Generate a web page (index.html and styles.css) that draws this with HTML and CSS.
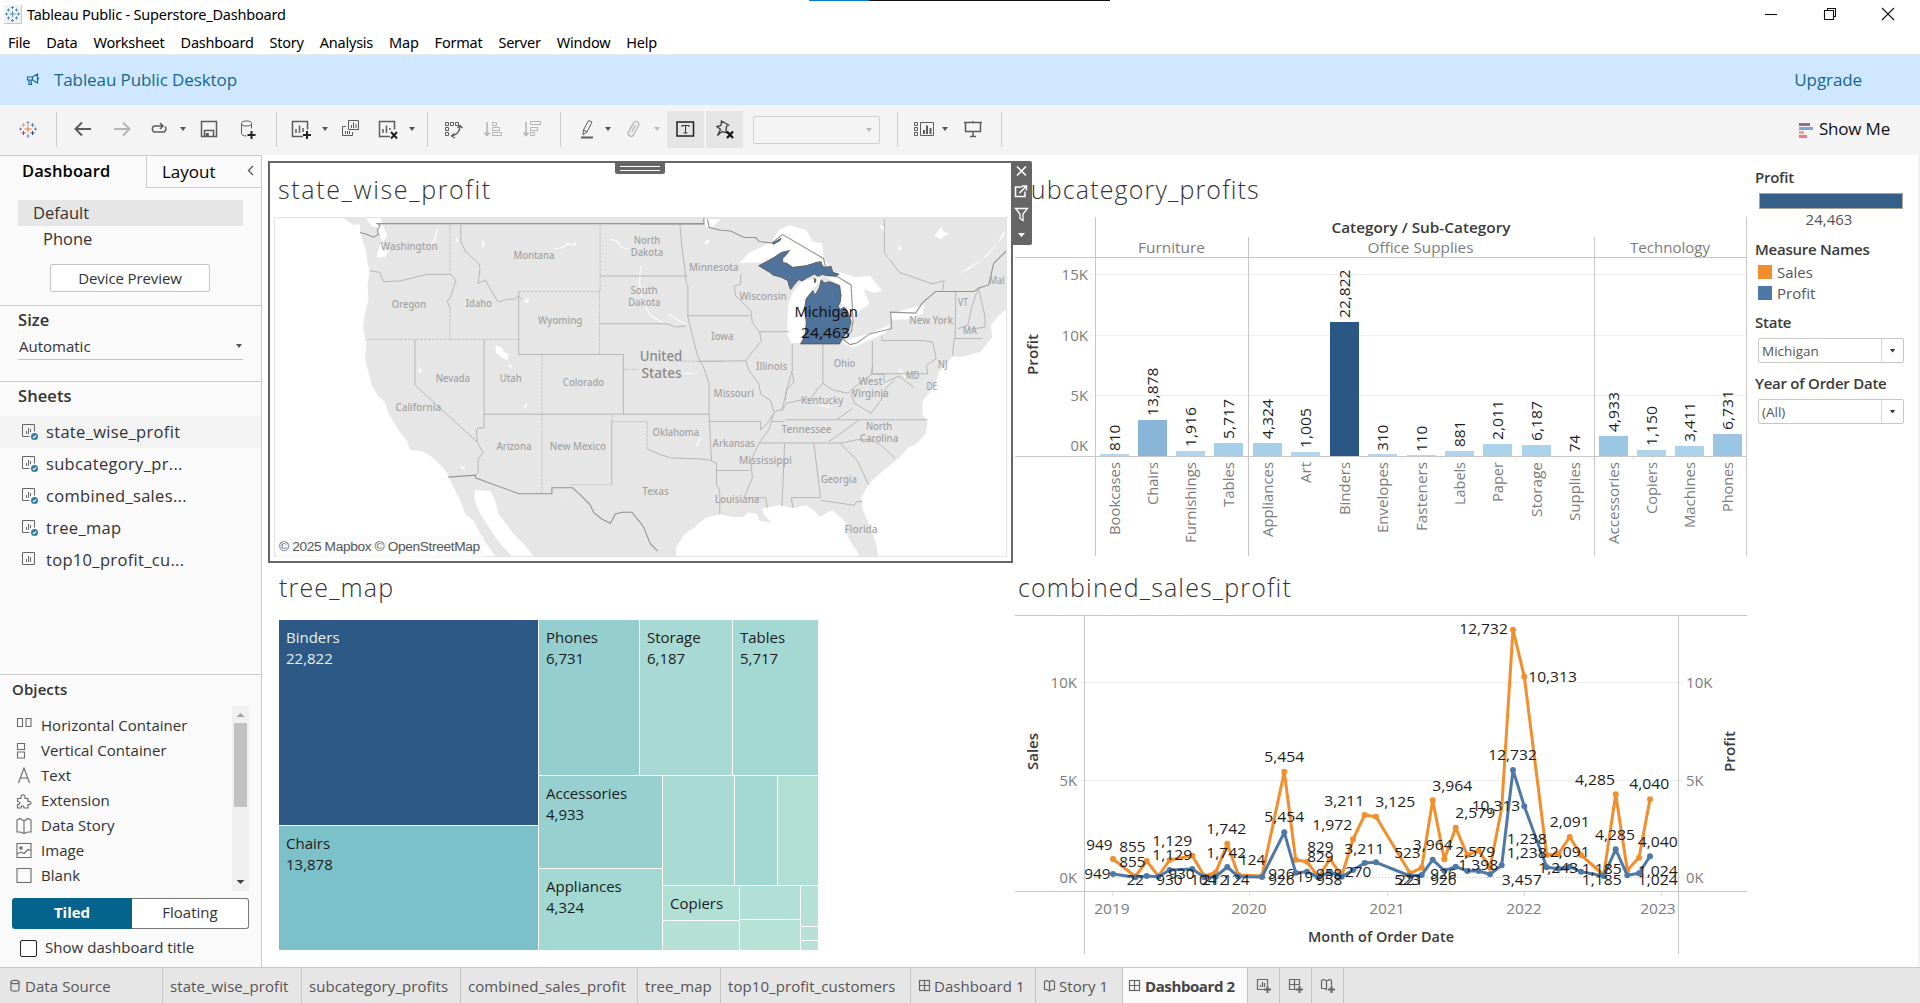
FILE: index.html
```html
<!DOCTYPE html>
<html lang="en">
<head>
<meta charset="utf-8">
<title>Tableau Public - Superstore_Dashboard</title>
<link rel="stylesheet" href="styles.css">
</head>
<body>
<svg width="0" height="0" class="defs">
  <symbol id="i-sheet" viewBox="0 0 18 18"><rect x="1.5" y="1.5" width="12" height="12" rx=".5"/><path d="M5.500 11V8M7.500 11V5M9.500 11V6"/></symbol>
  <symbol id="i-check" viewBox="0 0 18 18"><path d="M8.500 13.500h-7v-12h12v7"/><path d="M5.500 11V8M7.500 11V5M9.500 9V6"/><circle cx="13.500" cy="13.500" r="3.500" fill="#2f7ca3" stroke="none"/><path d="M11.800 13.600l1.200 1.200 2.100-2.400" stroke="#fff" stroke-width="1.100"/></symbol>
  <symbol id="i-grid" viewBox="0 0 14 14"><rect x="1.500" y="1.500" width="10" height="10"/><path d="M6.500 1.500v10M1.500 6.500h10"/></symbol>
  <symbol id="i-book" viewBox="0 0 14 14"><path d="M1.500 2.500l2-1 3 1.500 3-1.500 2 1v8l-2.500 0-2.500 1.500-2.500-1.500h-2.500zM6.500 3v9"/></symbol>
</svg>
<div class="app">
  <header class="titlebar">
    <svg class="app-icon" width="18" height="19" viewBox="0 0 18 19"><rect x="0" y="0" width="18" height="19" fill="#c9c9c9"/><rect x="0" y="0" width="17" height="18" fill="#f1f1f1"/><path d="M8.500 6v6M5.500 9h6M8.500 1v3M7 2.500h3M8.500 14v3M7 15.500h3M2.500 7.500v3M1 9h3M14.500 7.500v3M13 9h3M4.500 3.500v3M3 5h3M12.500 3.500v3M11 5h3M4.500 11.500v3M3 13h3M12.500 11.500v3M11 13h3" stroke="#4f90b5" fill="none"/></svg>
    <span class="win-title">Tableau Public - Superstore_Dashboard</span>
    <i class="progress"></i>
    <div class="win-buttons">
      <svg width="14" height="14" viewBox="0 0 14 14"><path d="M1 7.500h12"/></svg>
      <svg width="14" height="14" viewBox="0 0 14 14"><path d="M1.500 3.500h9v9h-9zM4.500 3.500v-2h8v8h-2"/></svg>
      <svg width="14" height="14" viewBox="0 0 14 14"><path d="M1 1l12 12M13 1L1 13"/></svg>
    </div>
  </header>
  <nav class="menubar"><span>File</span><span>Data</span><span>Worksheet</span><span>Dashboard</span><span>Story</span><span>Analysis</span><span>Map</span><span>Format</span><span>Server</span><span>Window</span><span>Help</span></nav>
  <div class="banner">
    <svg width="14" height="13" viewBox="0 0 14 13"><path d="M1.500 4h5l5-3v9l-5-3h-5zM3 7v4.500h2.500l-.5-4.500M6.500 4v3M11.500 4.500l1 1-1 1" fill="none" stroke="#14679c" stroke-width="1.200"/></svg>
    <span>Tableau Public Desktop</span><a class="upgrade">Upgrade</a>
  </div>
  <div class="toolbar">
    <svg class="ico m16" viewBox="0 0 24 24" fill="none" stroke-width="1.200"><path d="M12 8.500v7M8.500 12h7" stroke="#eb7a3a"/><path d="M12 4v4M10.500 5.500h3M12 17v4M10.500 19h3" stroke="#7a96b5"/><path d="M7.500 6v4M5.500 8h4" stroke="#e8a33b"/><path d="M16.500 6v4M14.500 8h4" stroke="#5b87a8"/><path d="M7.500 14v4M5.500 16h4" stroke="#c8324c"/><path d="M16.500 14v4M14.500 16h4" stroke="#2c4a7c"/><path d="M4.500 10.500v3M3 12h3M19.500 10.500v3M18 12h3" stroke="#7a7fa8"/></svg>
    <i class="sep m16"></i>
    <svg class="ico m14" viewBox="0 0 24 24"><path d="M11 5.500L4.500 12l6.500 6.500M5 12h15" stroke-width="2"/></svg>
    <svg class="ico m15 off" viewBox="0 0 24 24"><path d="M13 5.500l6.500 6.500-6.500 6.500M19 12H4" stroke-width="2"/></svg>
    <svg class="ico m13" viewBox="0 0 24 24"><path d="M15 9H7a3.500 3.500 0 0 0 0 6h10a3.500 3.500 0 0 0 1-5.500M13 6l3 3-3 3" stroke-width="1.500"/></svg>
    <i class="caret m7"></i>
    <svg class="ico m9" viewBox="0 0 24 24"><path d="M4.500 4.500h15v15h-15zM7.500 19.500v-6h9v6M9.500 19v-3M11 19v-3" stroke-width="1.500"/></svg>
    <svg class="ico m15" viewBox="0 0 24 24"><path d="M5.500 6.500v10c0 1.500 2 2.500 5 2.500M15.500 6.500v5"/><ellipse cx="10.500" cy="6.500" rx="5" ry="2.500"/><path d="M15.500 14v8M11.500 18h8" stroke="#222" stroke-width="2"/></svg>
    <i class="sep m16"></i>
    <svg class="ico m13" viewBox="0 0 24 24"><path d="M13 19.500H2.500v-15h15v8M6 16v-4M9.500 16V8.500M13 15v-4" stroke-width="1.500"/><path d="M17 14v8M13 18h8" stroke="#222" stroke-width="2"/></svg>
    <i class="caret m6"></i>
    <svg class="ico m9" viewBox="0 0 24 24"><path d="M9.500 3.500h10v9h-10zM12.500 11V8M14.500 11V5.500M17 11V7M7 9.500H3.500v9h10V15M6.500 17v-3M8.500 17v-3M10.500 17v-3"/></svg>
    <svg class="ico m14" viewBox="0 0 24 24"><path d="M13 19.500H2.500v-15h15v8M6 16v-4M9.500 16V8.500M13 13v-2" stroke-width="1.500"/><path d="M14 15l6 6.500M20 15l-6 6.500" stroke="#222" stroke-width="2"/></svg>
    <i class="caret m6"></i>
    <i class="sep m10"></i>
    <svg class="ico m14" viewBox="0 0 24 24"><path d="M3.500 5.500h3v3h-3zM8.500 5.500h3v3h-3zM13.500 5.500h3v3h-3zM3.500 10.500h3v3h-3zM3.500 15.500h3v3h-3z"/><path d="M18 9c0 5.500-3 8.500-8 10M15.500 11L18 8.500l2.500 2.500M12.500 16.500L9.500 19l3.500 2" stroke-width="1.300"/></svg>
    <svg class="ico m15 off" viewBox="0 0 24 24"><path d="M6 5v13M3.500 15.500L6 18.500l2.500-3" stroke-width="1.500"/><path d="M11.500 5.500h4v3h-4zM11.500 10.500h7v3h-7zM11.500 15.500h9v3h-9z"/></svg>
    <svg class="ico m15 off" viewBox="0 0 24 24"><path d="M6 5v13M3.500 15.500L6 18.500l2.500-3" stroke-width="1.500"/><path d="M10.500 4.500h10v3h-10zM10.500 10.500h7v3h-7zM10.500 15.500h4v3h-4z"/></svg>
    <i class="sep m16"></i>
    <svg class="ico m14" viewBox="0 0 24 24"><path d="M13.500 3.500l3.500 1.500-5 10-4 3 .5-5zM8.500 13l3.500 2"/><path d="M6 20.500h12" stroke-width="2"/></svg>
    <i class="caret m4"></i>
    <svg class="ico m8 off" viewBox="0 0 24 24"><path d="M8.500 13l4-7a2.600 2.600 0 0 1 5 2.500l-5 9.500a3 3 0 0 1-5.300-2.600L12 7.500M10.500 15.500l4-7.500" stroke-width="1.300"/></svg>
    <i class="caret m7 dim"></i>
    <span class="tool m5"><svg class="ico" viewBox="0 0 24 24"><path d="M3 5h16.500v14H3z" stroke="#222" stroke-width="1.500"/><path d="M8 10V8.500h7V10M11.500 8.500v7.500M9.500 16h4" stroke="#333"/></svg></span>
    <span class="tool m2"><svg class="ico" viewBox="0 0 24 24"><path d="M8.500 4l7 4-2 1.500-.5 4 1 2.500-5-1.500-4.500 4 3-6-3.500-3 4-1z" stroke-width="1.400" stroke="#444"/><path d="M14 14.500l6 6.500M20 14.500l-6 6.500" stroke="#111" stroke-width="2.200"/></svg></span>
    <span class="combo m10"><i class="caret dim"></i></span>
    <i class="sep m17"></i>
    <svg class="ico m14" viewBox="0 0 24 24"><path d="M2.500 5.500h3v3h-3zM2.500 10.500h3v3h-3zM2.500 15.500h3v3h-3zM8.500 5.500h13v13h-13z"/><path d="M12 17v-4M15 17V8.500M18.500 17v-6" stroke-width="2"/></svg>
    <i class="caret m4"></i>
    <svg class="ico m11" viewBox="0 0 24 24"><path d="M3 5.500h18M4.500 5.500v9h15v-9M12 14.500v5M9 19.500h6M12 4v1" stroke-width="1.500"/></svg>
    <i class="sep m16"></i>
    <span class="showme"><svg width="14" height="15" viewBox="0 0 14 15"><path fill="#8a6fa0" d="M0 0h11v3H0z"/><path fill="#7fa6cf" d="M0 4h14v3H0z"/><path fill="#f3a582" d="M0 8h5v3H0z"/><path fill="#fb7185" d="M0 12h8v3H0z"/></svg><span>Show Me</span></span>
  </div>

  <div class="workspace">
    <aside class="side">
      <div class="side-tabs"><b>Dashboard</b><span class="layout"><em>Layout</em><svg width="7" height="11" viewBox="0 0 7 11"><path d="M6 1L1.500 5.500 6 10" fill="none" stroke="#555" stroke-width="1.300"/></svg></span></div>
      <div class="devices">
        <div class="dev on">Default</div>
        <div class="dev phone">Phone</div>
        <div class="preview"><span>Device Preview</span></div>
      </div>
      <div class="size">
        <h4>Size</h4>
        <div class="size-select"><span>Automatic</span><i class="caret"></i></div>
      </div>
      <div class="sheets">
        <h4>Sheets</h4>
        <div class="sheet on"><svg><use href="#i-check"/></svg><span>state_wise_profit</span></div>
        <div class="sheet"><svg><use href="#i-check"/></svg><span>subcategory_pr...</span></div>
        <div class="sheet"><svg><use href="#i-check"/></svg><span>combined_sales...</span></div>
        <div class="sheet"><svg><use href="#i-check"/></svg><span>tree_map</span></div>
        <div class="sheet"><svg><use href="#i-sheet"/></svg><span>top10_profit_cu...</span></div>
      </div>
      <div class="objects">
        <h5>Objects</h5>
        <div class="obj-wrap">
          <div class="obj-list">
            <div><svg viewBox="0 0 16 17"><path d="M1.500 1.500h5v8h-5zM10 1.500h5v8h-5z"/></svg><span>Horizontal Container</span></div>
            <div><svg viewBox="0 0 16 17"><path d="M1.500 1.500h7v6h-7zM1.500 10h7v6h-7z"/></svg><span>Vertical Container</span></div>
            <div><svg viewBox="0 0 16 17"><path d="M2.500 16L8 1l5.500 15M4.500 11h7"/></svg><span>Text</span></div>
            <div><svg viewBox="0 0 16 17"><path d="M1.500 6.500h3.500c-1-5 5-5 4 0h3v3c4-1 4 4 0 3v3.500h-4c0-3-3-3-3 0H1.500v-3.500c3 0 3-3 0-3z"/></svg><span>Extension</span></div>
            <div><svg viewBox="0 0 16 17"><path d="M1 3l3-1.500L8 4l4-2.500L15 3v12h-3l-4 1.500L4 15H1zM8 4v12"/></svg><span>Data Story</span></div>
            <div><svg viewBox="0 0 16 17"><path d="M1 1.500h14v14H1zM1 12l4-2 3 1.500 4-4 3 1"/><circle cx="5" cy="6" r="1.200" fill="#666"/></svg><span>Image</span></div>
            <div><svg viewBox="0 0 16 17"><path d="M1 1.500h14v14H1z"/></svg><span>Blank</span></div>
          </div>
          <div class="scroll"><i class="up"></i><i class="thumb"></i><i class="down"></i></div>
        </div>
        <div class="toggle"><b>Tiled</b><span>Floating</span></div>
        <label class="show-title"><i></i><span>Show dashboard title</span></label>
      </div>
    </aside>

    <main class="canvas">
      <section class="left-col">
        <div class="zone map-zone">
          <i class="grip"></i>
          <div class="zone-actions">
            <svg viewBox="0 0 21 84"><path d="M6 5.500l9 9M15 5.500l-9 9" stroke-width="1.600"/><path d="M11 26H4.500v9.500H14v-5M8.500 32l6-6M11 25h4.500v4.500" stroke-width="1.500"/><path d="M4.500 47.500h12l-4.500 5.500v6.500l-3-2v-4.500z" stroke-width="1.300"/><path d="M7 72h7l-3.500 4z" fill="#fff" stroke="none"/></svg>
          </div>
          <h2>state_wise_profit</h2>
          <svg class="map" viewBox="27 186 2199 1020" preserveAspectRatio="none">
            <rect x="27" y="186" width="2199" height="1020" fill="#fff"/>
            <path class="land" d="M235 186L262 207 283 205 283 228 290 255 302 290 305 320 312 345 305 390 308 430 295 490 292 520 302 560 297 610 308 650 318 690 335 720 358 742 368 775 385 805 405 835 425 860 432 886 470 890 500 908 525 932 545 955 552 975 565 1000 585 1040 600 1080 625 1100 640 1130 660 1165 690 1206H740L710 1175 690 1150 665 1110 645 1080 628 1040 627 1005 650 1008 675 1010 690 1040 700 1080 720 1105 745 1140 775 1170 805 1206H1235L1233 1180 1255 1145 1275 1128 1290 1120 1300 1108 1325 1090 1365 1080 1405 1088 1435 1088 1450 1075 1475 1078 1485 1100 1520 1106 1498 1080 1490 1062 1510 1060 1545 1052 1585 1062 1625 1053 1650 1070 1665 1088 1690 1075 1705 1068 1725 1085 1745 1108 1743 1130 1760 1165 1780 1195 1785 1206H1842L1835 1165 1815 1115 1797 1070 1790 1030 1812 990 1845 958 1885 925 1910 905 1930 880 1955 868 1985 838 1990 800 1975 780 1975 740 1990 720 2012 690 2025 650 2065 605 2095 605 2150 590 2165 570 2185 545 2180 510 2205 480 2226 462V186H345L350 205 365 240 350 260 335 215 318 210 300 186Z"/>
            <path class="water" d="M690 570l20 8 5 12 15 8-5 18-15-8-18-15zM728 628l12 2-4 12zM458 632l12 18-8 4zM585 930l18 15-14-2zM335 290l12-30 10 8-5 20 20-10-12 25-25 3zM780 750l5-8 0 12-15 10zM900 1018l8 15-6-6zM570 243l10 12-6 5zM650 250l8 12-8 15zM778 434l10-5 3 12-12 0z"/>
            <path class="river" d="M515 217l-5 30-12 18M865 280l30-5 10-12 25 5v-10M1035 250l20 5 15 20 20 5M1128 330l-5 50 10 60 25 40 40 25M1210 475l30 20 20 10"/>
            <g transform="translate(1125 0)">
              <path class="water" d="M298 322L330 290 395 260 418 222 450 208 500 222 520 258 548 262 552 310 575 335 540 322 460 335 430 310 380 320zM550 365L490 376 462 405 445 450 443 535 455 565 485 562 502 500 495 430 540 380zM553 348L600 350 650 365 692 360 728 405 705 412 672 400 690 445 655 470 640 500 620 462 605 440 605 390 560 365zM605 560L640 548 690 535 752 508 740 532 690 555 640 578zM752 475L800 462 855 448 850 475 800 492 758 492zM1095 225L1075 262 1030 310 958 355 990 340 1045 300 1098 235zM192 190l50 0-20 20-22 4zM910 210l-25 30 20 10 10-10 15-5-20-10zM720 205l14 8 6 14-12-6zM778 265l8 12-8 10zM745 300l10 8-6 4zM190 260l20-10-6 15z"/>
              <path class="river" d="M180 850l-10 25M540 750l30 8M780 640l20 30M130 655l30 0"/>
            </g>
            <g class="lines">
              <path class="nat" d="M283 230l20 5 20 9 15-8-3-13 8-15-8-5H1316M548 968l82-6v8l130 48h100v-18h62l22 20 30 30 12 25 25 20 25 12 15-28 20-5h30l20 25 15 20 20 50 22 22"/>
              <path class="pale" d="M553 205v145M1005 205v202M760 408h245M1003 408v190M448 552H300M553 465v87H448M553 552h207M830 598v420M915 991h125M1041 780v25M1041 800h106v83M1075 643h50M1375 618h-160"/>
              <path d="M312 345l30 5 12 28 50-2 80-20h73M556 355l15 20-16 50-10 12 10 25M586 205v55l15 28 38 35 5 15-6 45 22-10 18 33 20 33 30-8h20l12-10 10 12M760 408v190M1005 361h262M1003 505h200l30 10 30-3M448 552v138l187 172 18 32-15 20v40l-8 10M656 552v267l-15 0-8 5 2 38M656 778h677M760 598h315v180M1040 800v191M1147 883l40 17 30 10 50 2 30 0 40 5"/>
            </g>
            <g class="lines" transform="translate(1125 0)">
              <path class="nat" d="M192 186v18H0M203 190l5 25 35 8 30 2 40 20 35 0 10 12 38 4 33-25 123 72 8 35 75 45 6 110-5 30-24 25 20 15 20-5 40-28 65-15-3-50 75 3 20-30 40-35h115l20-12 25-8 15-65 45-45"/>
              <path d="M120 205l5 60 8 60 6 55 5 10v92M143 481h185M143 481l10 40 20 80 20 40 15 45V780M173 619l145-2 12-16 20-25 15-20-5-25-22-30-5-35-45-45-5-30 20-5 0-30M360 529h88M318 617l10 30 30 40 5 30 30 20 10 35 25-10 15-60 20-20-5-30M458 565v80l-20 70v20M550 565v120l-15 15-20 30-30 5-45 10-15 25M550 685l30 20 45 10 35-30 35-25 5-30M699 558v98h167l-5-25 30-20-10-50-25-5H728v-12M699 658h35v25l45-20 45 35M660 700l-25 15 10 30 50 30 30-40 15-35 25-25M940 600l5-50h85M950 408l-2 140M1018 395l-20 60-12 55-30 10M1018 395l20 90v30l-50 8M208 800h155v25l20-20 20-30M208 780l7 140M215 920l15 5v65l10 20v70M230 948h100M403 775l-15 50-30 40-25 55 5 50-25 60M358 865h250l45-10h40l30 15 45 42M438 795h427M660 795l-90 65M395 800h40M590 795l50-35M435 867l-8 190M523 867l20 163h-88l5 30M545 1038l100 15 5-10 20-3M603 867l50 50 35 75M313 1030h65l5 30M735 190v100l45 60 100 35 35-10-5 30"/>
            </g>
            <g transform="translate(1125 0)" class="mich"><path d="M357 330L400 307 425 290 450 284 440 297 428 310 430 322 440 322 460 335 500 330 530 320 545 318 548 330 555 335 575 332 580 350 598 355 590 362 560 360 550 356 535 362 525 355 500 368 488 376 478 372 470 380 462 390 453 402 448 390 445 375 425 365 400 358 390 350zM545 372L555 382 570 378 585 384 600 390 605 420 602 440 596 452 602 462 615 455 628 475 635 500 628 525 612 545 600 566H483L497 540 500 500 495 460 500 430 520 405 525 418 532 410 540 395zM398 262L425 247 420 255 402 265zM524 368l6 4-4 10z"/></g>
            <g class="states" id="states"></g>
          </svg>
          <div class="credit">© 2025 Mapbox © OpenStreetMap</div>
        </div>
        <div class="tree-zone">
          <h2>tree_map</h2>
          <div class="treemap">
            <div class="tm-col a">
              <div class="c1"><span>Binders</span><span>22,822</span></div>
              <div class="c2"><span>Chairs</span><span>13,878</span></div>
            </div>
            <div class="tm-col b">
              <div class="tm-row top"><div class="phones"><span>Phones</span><span>6,731</span></div><div class="storage"><span>Storage</span><span>6,187</span></div><div class="tables"><span>Tables</span><span>5,717</span></div></div>
              <div class="tm-row rest">
                <div class="tm-col acc"><div class="c-acc"><span>Accessories</span><span>4,933</span></div><div class="c-app"><span>Appliances</span><span>4,324</span></div></div>
                <div class="tm-col misc">
                  <div class="tm-row m-top"><div></div><div></div><div></div></div>
                  <div class="tm-row m-bot">
                    <div class="tm-col k1"><div class="copiers"><span>Copiers</span></div><div></div></div>
                    <div class="tm-col k2"><div></div><div></div></div>
                    <div class="tm-col k3"><div></div><div></div><div></div></div>
                  </div>
                </div>
              </div>
            </div>
          </div>
        </div>
      </section>
      <section class="mid-col">
        <div class="bar-zone">
          <h2>subcategory_profits</h2>
          <svg id="bars" class="chart" width="733" height="340" viewBox="1015 217 733 340"></svg>
        </div>
        <div class="line-zone">
          <h2>combined_sales_profit</h2>
          <svg id="trend" class="chart" width="733" height="340" viewBox="1015 615 733 340"></svg>
        </div>
      </section>
      <section class="legend">
        <h3>Profit</h3>
        <div class="ramp"></div>
        <div class="ramp-value">24,463</div>
        <h3>Measure Names</h3>
        <div class="key"><i class="k-sales"></i><span>Sales</span></div>
        <div class="key"><i class="k-profit"></i><span>Profit</span></div>
        <h3 class="f1">State</h3>
        <div class="select"><span>Michigan</span><b><i class="caret"></i></b></div>
        <h3 class="f2">Year of Order Date</h3>
        <div class="select"><span>(All)</span><b><i class="caret"></i></b></div>
      </section>
    </main>
  </div>

  <footer class="tabs">
    <div class="t-ds"><svg viewBox="0 0 14 14"><ellipse cx="7" cy="3" rx="4" ry="1.700"/><path d="M3 3v8c0 1.500 8 1.500 8 0V3"/></svg><span>Data Source</span></div>
    <div class="t1"><span>state_wise_profit</span></div>
    <div class="t2"><span>subcategory_profits</span></div>
    <div class="t3"><span>combined_sales_profit</span></div>
    <div class="t4"><span>tree_map</span></div>
    <div class="t5"><span>top10_profit_customers</span></div>
    <div class="t6"><svg><use href="#i-grid"/></svg><span>Dashboard 1</span></div>
    <div class="t7"><svg><use href="#i-book"/></svg><span>Story 1</span></div>
    <div class="t8 on"><svg><use href="#i-grid"/></svg><b>Dashboard 2</b></div>
    <div class="tn"><svg class="add" viewBox="0 0 16 16"><path d="M8 11.500H1.500v-10h10v6M4.500 9V7M6.500 9V4M8.500 9V5"/><path d="M11.500 8v7M8 11.500h7" stroke-width="2"/></svg></div>
    <div class="tn"><svg class="add" viewBox="0 0 16 16"><path d="M8 11.500H1.500v-10h10v6M6.500 1.500v10M1.500 6.500h10"/><path d="M11.500 8v7M8 11.500h7" stroke-width="2"/></svg></div>
    <div class="tn"><svg class="add" viewBox="0 0 16 16"><path d="M7 12l-2-1.500H1.500v-8l2-1 3 1.500 3-1.500 2 1v5M6.500 3v9"/><path d="M11.500 8v7M8 11.500h7" stroke-width="2"/></svg></div>
  </footer>
</div>
<script src="charts.js"></script>
</body>
</html>
```
FILE: styles.css
```css
* { box-sizing: border-box; }
body { margin: 0; font-family: "Open Sans", "Noto Sans", sans-serif; color: #333; background: #fff; overflow: hidden; }
h2, h3, h4, h5 { margin: 0; }
span, b, h2, h3, h4, h5 { white-space: nowrap; }
svg { display: block; flex: none; }
.defs { position: absolute; }
.app { width: 1920px; height: 1003px; display: flex; flex-direction: column; }

.titlebar { height: 28px; display: flex; align-items: center; padding-left: 4px; position: relative; color: #000; flex: none; }
.win-title { font: 14.5px/28px "Noto Sans", sans-serif; letter-spacing: -0.21px; margin-left: 5px; }
.progress { position: absolute; left: 809px; top: 0; width: 301px; height: 1px; background: linear-gradient(90deg, #0078d7 60px, #111 60px); }
.win-buttons { margin-left: auto; display: flex; gap: 44.5px; margin-right: 25px; }
.win-buttons svg { fill: none; stroke: #111; stroke-width: 1.1; }
.menubar { height: 27px; border-bottom: 1px solid #e9e9e9; display: flex; gap: 16px; padding-left: 8px; font: 14.5px/29px "Noto Sans", sans-serif; letter-spacing: -0.23px; color: #000; flex: none; }
.banner { height: 50px; background: #cfe8ff; display: flex; align-items: center; padding: 0 58px 1px 26px; color: #14688f; font-size: 17px; letter-spacing: -0.1px; flex: none; }
.banner span { margin-left: 14px; }
.banner span, .upgrade { margin-top: -1px; }
.upgrade { margin-left: auto; }
.toolbar { height: 50px; background: #f4f4f4; display: flex; align-items: center; flex: none; padding-bottom: 2px; }
.ico { width: 24px; height: 24px; fill: none; stroke: #5c5c5c; stroke-width: 1; }
.off { stroke: #b4b4b4; }
.sep { width: 1px; height: 35px; background: #cdcdcd; }
.caret { display: block; width: 10px; height: 4px; background: #555; clip-path: polygon(20% 0, 80% 0, 50% 100%); }
.dim { background: #bbb; }
.tool { width: 37px; height: 37px; background: #e5e5e5; display: flex; align-items: center; justify-content: center; }
.combo { width: 127px; height: 28px; border: 1px solid #cfcfcf; border-radius: 2px; display: flex; align-items: center; justify-content: flex-end; padding-right: 5px; margin-top: 2px; }
.m2 { margin-left: 2px; } .m4 { margin-left: 4px; } .m5 { margin-left: 5px; } .m6 { margin-left: 6px; } .m7 { margin-left: 7px; }
.m8 { margin-left: 8px; } .m9 { margin-left: 9px; } .m10 { margin-left: 10px; } .m11 { margin-left: 11px; } .m13 { margin-left: 13px; }
.m14 { margin-left: 14px; } .m15 { margin-left: 15px; } .m16 { margin-left: 16px; } .m17 { margin-left: 17px; }
.showme { margin-left: auto; width: 121px; display: flex; align-items: center; gap: 6px; font-size: 17px; letter-spacing: -0.2px; color: #111; padding-top: 2px; }
.showme span { margin-top: -3px; }

.workspace { height: 812px; display: flex; flex: none; }
.side { width: 262px; background: #fafafa; border-right: 1px solid #cbcbcb; border-top: 1px solid #cbcbcb; display: flex; flex-direction: column; }
.side-tabs { height: 32px; display: flex; color: #000; font-size: 17px; line-height: 31px; flex: none; }
.side-tabs b { width: 146px; padding-left: 22px; font-weight: 600; font-size: 16.5px; line-height: 29px; letter-spacing: 0.1px; }
.layout { flex: 1; border-left: 1px solid #cbcbcb; border-bottom: 1px solid #cbcbcb; display: flex; justify-content: space-between; padding: 0 7px 0 15px; }
.layout em { font-style: normal; }
.layout svg { margin-top: 9px; }
.devices { height: 117px; padding: 12px 18px 0; flex: none; }
.dev { height: 26px; line-height: 25px; padding-left: 15px; font-size: 16.5px; letter-spacing: 0; }
.dev.on { background: #e6e6e6; }
.phone { padding-left: 25px; }
.preview { width: 160px; height: 28px; margin: 12px 0 0 32px; border: 1px solid #c4c4c4; border-radius: 2px; font-size: 15px; text-align: center; line-height: 26px; background: #fff; letter-spacing: -0.1px; }
.size { height: 76px; border-top: 1px solid #cbcbcb; padding: 0 18px; flex: none; }
.side h4 { font-size: 16.5px; font-weight: 600; line-height: 27px; height: 29px; letter-spacing: 0.1px; }
.size-select { height: 25px; border-bottom: 1px solid #c4c4c4; display: flex; justify-content: space-between; align-items: center; font-size: 15px; padding-bottom: 2px; padding-left: 1px; }
.size-select .caret { margin-right: -1px; }
.sheets { border-top: 1px solid #cbcbcb; flex: 1; }
.side .sheets h4 { padding-left: 18px; height: 34px; }
.sheet { height: 32px; display: flex; align-items: center; padding-left: 21px; font-size: 16.5px; letter-spacing: 0.32px; }
.sheet.on { background: #f3f3f3; }
.sheet svg { width: 18px; height: 18px; fill: none; stroke: #666; stroke-width: 1; }
.sheet span { margin: -2px 0 0 7px; }
.objects { height: 293px; border-top: 1px solid #cbcbcb; padding: 0 12px; flex: none; }
.objects h5 { font-size: 15px; font-weight: 600; line-height: 29px; height: 31px; letter-spacing: 0.1px; }
.obj-wrap { height: 185px; display: flex; justify-content: space-between; }
.obj-list { padding: 7px 0 0 4px; }
.obj-list div { height: 25px; display: flex; align-items: center; gap: 9px; font-size: 15px; letter-spacing: 0.05px; }
.obj-list span { margin-top: -2px; }
.obj-list svg { width: 16px; height: 17px; fill: none; stroke: #6a6a6a; stroke-width: 1.1; margin-top: 0; }
.scroll { width: 17px; background: #f0f0f0; display: flex; flex-direction: column; align-items: center; }
.up { width: 8px; height: 4px; background: #a3a3a3; clip-path: polygon(50% 0, 100% 100%, 0 100%); margin: 7px 0 6px; }
.thumb { width: 13px; height: 84px; background: #c1c1c1; }
.down { width: 8px; height: 4px; background: #444; clip-path: polygon(0 0, 100% 0, 50% 100%); margin-top: 73px; }
.toggle { margin-top: 7px; height: 31px; display: flex; font-size: 15px; text-align: center; line-height: 27px; }
.toggle b { width: 120px; background: #06648c; color: #fff; border-radius: 3px 0 0 3px; line-height: 29px; }
.toggle span { flex: 1; border: 1px solid #777; border-left: 0; border-radius: 0 3px 3px 0; background: #fff; color: #333; }
.show-title { display: flex; align-items: center; margin: 11px 0 0 8px; font-size: 15px; height: 17px; letter-spacing: 0.05px; }
.show-title i { width: 17px; height: 17px; border: 1px solid #222; border-radius: 2px; background: #fff; margin-right: 8px; }
.show-title span { margin-top: -3px; }

.canvas { flex: 1; display: flex; background: #fff; border-right: 2px solid #f2f2f2; }
.left-col { width: 751px; padding: 6px 0 0 6px; }
h2 { font-weight: 300; font-size: 25px; line-height: 32px; letter-spacing: 1.15px; color: #333; }
.zone { width: 745px; height: 402px; border: 2px solid #666; position: relative; padding: 10px 4px 0; }
.zone h2 { padding-left: 4px; height: 44px; letter-spacing: 1.65px; }
.grip { position: absolute; left: 345px; top: 0; width: 50px; height: 11px; background: linear-gradient(#666 2px, #fff 2px, #fff 3px, #666 3px, #666 6px, #fff 6px, #fff 7px, #666 7px) 5px 1px / 40px 9px no-repeat #666; border-radius: 0 0 2px 2px; }
.zone-actions { position: absolute; left: 741px; top: -2px; width: 21px; height: 84px; background: #666; border-radius: 0 2px 2px 0; z-index: 2; }
.zone-actions svg { width: 21px; height: 84px; fill: none; stroke: #fff; }
.map { width: 733px; height: 340px; border: 1px solid #e3e3e3; }
.land { fill: #e6e6e6; }
.water { fill: #fff; }
.river { fill: none; stroke: #fafafa; stroke-width: 4; }
.lines path { fill: none; stroke: #b2b2b2; stroke-width: 2.8; }
.lines .nat { stroke: #949494; stroke-width: 3.3; }
.lines .pale { stroke: #c2c2c2; stroke-dasharray: 9 3; }
.mich path { fill: #4f739a; stroke: #555; stroke-width: 2.5; }
.states text { font-family: "Noto Sans", sans-serif; font-size: 31px; fill: #a3a3a3; font-weight: 500; text-anchor: middle; }
.states .country { font-size: 41px; fill: #8a8a8a; }
.states .mark { font-size: 46px; fill: #111; font-weight: 400; }
.credit { position: absolute; left: 7px; bottom: 4px; width: 207px; height: 21px; padding-left: 2px; background: rgba(250,250,250,.8); font: 13.7px/21px "Liberation Sans", Arial, sans-serif; color: #555; letter-spacing: -0.36px; white-space: nowrap; }
.tree-zone { padding: 8px 0 0 11px; }
.tree-zone h2 { height: 49px; }
.treemap { width: 539px; height: 330px; display: flex; gap: 1px; font: 15px/21px "Open Sans", sans-serif; color: #1c1c1c; }
.treemap .tm-col, .treemap .tm-row { display: flex; gap: 1px; }
.treemap .tm-col { flex-direction: column; }
.treemap span { display: block; padding-left: 7px; }
.treemap span:first-child { padding-top: 7px; }
.a { width: 259px; } .c1 { height: 205px; background: #2c5985; color: #e9eff5; } .c2 { height: 124px; background: #7cc0c9; }
.b { width: 279px; }
.top { height: 155px; } .rest { height: 174px; }
.phones { width: 100px; background: #94cecf; } .storage { width: 92px; background: #a8d9d4; } .tables { width: 85px; background: #a4d8d3; }
.acc { width: 123px; } .c-acc { height: 92px; background: #98cfcf; } .c-app { height: 81px; background: #a4d8d2; }
.misc { width: 155px; }
.m-top { height: 109px; } .m-top div { width: 71px; background: #a9dad4; } .m-top div + div { width: 42px; background: #a4d8d3; } .m-top div:last-child { width: 40px; background: #b2dfd4; }
.m-bot { height: 64px; }
.k1 { width: 76px; } .k2 { width: 60px; } .k3 { width: 17px; }
.k1 div { height: 29px; background: #b6e1d6; } .k1 .copiers { height: 34px; background: #b2dfd4; }
.k2 div { height: 33px; background: #b2dfd6; } .k2 div + div { height: 30px; background: #b7e2d6; }
.k3 div { height: 40px; background: #b6e1d6; } .k3 div:nth-child(2) { height: 13px; } .k3 div:nth-child(3) { height: 9px; }
.mid-col { width: 735px; padding: 18px 0 0 2px; }
.mid-col h2 { height: 44px; padding-left: 3px; }
.bar-zone { height: 398px; }
.chart { overflow: visible; }
.chart text { font-family: "Open Sans", "Noto Sans", sans-serif; font-size: 15px; fill: #1c1c1c; }
.chart text.ax { fill: #7c7c7c; }
.chart text.ttl { font-weight: 600; fill: #3a3a3a; }
.legend { padding: 12px 0 0 7px; width: 170px; }
.legend h3 { font-size: 15px; font-weight: 600; line-height: 20px; color: #3a3a3a; letter-spacing: -0.25px; }
.ramp { margin: 6px 0 0 4px; width: 144px; height: 16px; background: #355f89; border: 1px solid #a8a392; }
.ramp-value { width: 140px; margin-left: 4px; text-align: center; font-size: 15px; line-height: 21px; margin-top: 0; color: #555; }
.ramp-value + h3 { margin-top: 9px; line-height: 21px; }
.key { height: 21px; display: flex; align-items: center; gap: 5px; padding-left: 3px; font-size: 15px; color: #555; }
.ramp-value + h3 + .key { margin-top: 1px; }
.key i { width: 14px; height: 14px; background: #f28e2b; }
.key .k-profit { background: #4e79a7; }
.legend .f1 { margin-top: 9px; }
.legend .f2 { margin-top: 10px; }
.select { width: 146px; height: 25px; margin: 5px 0 0 3px; border: 1px solid #c6c6c6; border-radius: 2px; display: flex; justify-content: space-between; font-size: 13.5px; line-height: 24px; padding-left: 3px; color: #555; }
.legend .f1 + .select, .legend .f2 + .select { margin-top: 6px; }
.select b { width: 22px; border-left: 1px solid #d6d6d6; display: flex; align-items: center; justify-content: center; }
.select .caret { background: #333; }

.tabs { height: 36px; background: #e6e6e6; border-top: 1px solid #c8c8c8; display: flex; font-size: 15px; color: #555; flex: none; letter-spacing: 0.07px; }
.tabs div { border-right: 1px solid #c4c4c4; display: flex; align-items: center; gap: 2px; padding-left: 7px; }
.tabs svg { width: 14px; height: 14px; fill: none; stroke: #666; stroke-width: 1.2; }
.tabs .add { width: 16px; height: 16px; }
.tabs .t-ds { width: 163px; padding-left: 8px; gap: 3px; }
.t1 { width: 139px; } .t2 { width: 159px; } .t3 { width: 177px; } .t4 { width: 83px; } .t5 { width: 190px; }
.t6 { width: 125px; } .t7 { width: 87px; } .t8 { width: 125px; }
.tabs .tn { width: 32px; padding-left: 8px; }
.tabs .on { background: #fafafa; color: #444; }
.tabs .t8 { padding-left: 5px; gap: 3px; }
.t8 b { font-weight: 700; letter-spacing: -0.4px; }
```
FILE: charts.js
```js
const NS = 'http://www.w3.org/2000/svg';
function add(parent, tag, attrs, text) {
  const el = document.createElementNS(NS, tag);
  for (const k in attrs) el.setAttribute(k, attrs[k]);
  if (text !== undefined) el.textContent = text;
  parent.appendChild(el);
  return el;
}
const line = (p, x1, y1, x2, y2, c, dash) => add(p, 'path', { d: `M${x1} ${y1}L${x2} ${y2}`, stroke: c, fill: 'none', 'stroke-dasharray': dash || 'none' });
const label = (p, x, y, t, w, cls, anchor, rot) => add(p, 'text', {
  x, y, class: cls || '', 'text-anchor': anchor || 'start', textLength: w, lengthAdjust: 'spacingAndGlyphs',
  ...(rot ? { transform: `rotate(-90 ${x} ${y})` } : {})
}, t);
const numWidth = t => ({ 2: 17, 3: 26.3, 5: 40, 6: 48.5 })[t.length];

// state names over the map: text, centre x, baseline, width
[['Washington', 431, 283, 171], ['Montana', 806, 309, 123], ['North', 1146, 265, 80], ['Dakota', 1146, 301, 97],
 ['Oregon', 430, 458, 103], ['Idaho', 640, 455, 78], ['South', 1137, 416, 81], ['Dakota', 1138, 452, 97],
 ['Wyoming', 885, 506, 133], ['Nevada', 562, 680, 103], ['Utah', 736, 680, 66], ['Colorado', 955, 692, 124],
 ['California', 458, 769, 137], ['Arizona', 746, 887, 105], ['New Mexico', 938, 887, 169], ['Texas', 1172, 1022, 80],
 ['Minnesota', 1347, 347, 149], ['Wisconsin', 1495, 434, 142], ['Iowa', 1373, 554, 67], ['Illinois', 1521, 646, 94],
 ['Ohio', 1740, 636, 65], ['West', 1818, 689, 72], ['Virginia', 1818, 726, 110], ['Kentucky', 1673, 746, 127],
 ['Missouri', 1407, 725, 121], ['Oklahoma', 1233, 845, 140], ['Arkansas', 1407, 877, 127], ['Tennessee', 1626, 834, 150],
 ['North', 1844, 827, 79], ['Carolina', 1844, 863, 116], ['Mississippi', 1502, 929, 159], ['Georgia', 1723, 985, 109],
 ['Louisiana', 1417, 1045, 134], ['Florida', 1790, 1137, 99], ['New York', 2001, 507, 132], ['VT', 2097, 451, 30],
 ['MA', 2117, 537, 42], ['NJ', 2036, 640, 30], ['MD', 1945, 671, 40], ['DE', 2003, 706, 33], ['Mai', 2199, 384, 46]
].forEach(([t, x, y, w]) => label(states, x, y, t, w, '', 'middle'));
label(states, 1188, 617, 'United', 128, 'country', 'middle');
label(states, 1190, 668, 'States', 121, 'country', 'middle');
label(states, 1685, 486, 'Michigan', 191, 'mark', 'middle');
label(states, 1683, 549, '24,463', 148, 'mark', 'middle');

// profit per sub-category: name, name width, value, bar x, bar top, value start, colour
[274.5, 335.5, 395.5].forEach(y => line(bars, 1090, y, 1746, y, '#efefef'));
[['Bookcases', 73, '810', 1100, 454, 451, '#b3d8ee'], ['Chairs', 43, '13,878', 1138, 420, 416, '#89b5d9'],
 ['Furnishings', 81, '1,916', 1176, 451, 447, '#b0d6ee'], ['Tables', 45, '5,717', 1214, 443, 439, '#a6cfe9'],
 ['Appliances', 75, '4,324', 1253, 443, 439, '#a6cfe9'], ['Art', 21, '1,005', 1291, 452, 448, '#b1d7ee'],
 ['Binders', 53, '22,822', 1330, 322, 318, '#2a5783'], ['Envelopes', 71, '310', 1368, 454, 451, '#b1d7ee'],
 ['Fasteners', 69, '110', 1407, 455, 452, '#b5daef'], ['Labels', 43, '881', 1445, 451, 447, '#afd5ed'],
 ['Paper', 40, '2,011', 1483, 444, 440, '#a9d2eb'], ['Storage', 55, '6,187', 1522, 445, 441, '#aad3ec'],
 ['Supplies', 59, '74', 1560, 456, 452, '#b5daef'], ['Accessories', 82, '4,933', 1599, 436, 432, '#9cc7e3'],
 ['Copiers', 52, '1,150', 1637, 450, 446, '#afd5ed'], ['Machines', 66, '3,411', 1675, 446, 442, '#aad3ec'],
 ['Phones', 50, '6,731', 1713, 434, 430, '#9bc6e3']
].forEach(([n, w, v, x, top, vy, c]) => {
  add(bars, 'rect', { x, y: top, width: 29, height: 456 - top, fill: c });
  label(bars, x + 19.5, 462, n, w, 'ax', 'end', true);
  label(bars, x + 19.5, vy, v, numWidth(v), '', 'start', true);
  line(bars, x + 33.5, 457, x + 33.5, 460, '#ececec');
});
line(bars, 1015, 257.5, 1746, 257.5, '#c6c6c6');
line(bars, 1015, 456.5, 1746, 456.5, '#c6c6c6');
[[1095.5, 217], [1248.5, 237], [1594.5, 237], [1746.5, 217]].forEach(([x, y]) => line(bars, x, y, x, 556, '#c6c6c6'));
[['15K', 280], ['10K', 341], ['5K', 401], ['0K', 451]].forEach(([t, y]) => label(bars, 1088, y, t, t.length * 9 - 0.5, 'ax', 'end'));
label(bars, 1171.5, 253, 'Furniture', 67, 'ax', 'middle');
label(bars, 1420.5, 253, 'Office Supplies', 106, 'ax', 'middle');
label(bars, 1670, 253, 'Technology', 80, 'ax', 'middle');
label(bars, 1421, 233, 'Category / Sub-Category', 179, 'ttl', 'middle');
label(bars, 1038, 375, 'Profit', 41, 'ttl', 'start', true);

// sales and profit per month
line(trend, 1079, 682.5, 1683, 682.5, '#efefef');
line(trend, 1079, 780.5, 1683, 780.5, '#efefef');
line(trend, 1079, 877.5, 1683, 877.5, '#cfcfcf', '1 2');
const months = [1113, 1135.3, 1146.7, 1158.3, 1169.7, 1192.3, 1204.3, 1215.7, 1227.3, 1238.3, 1262, 1284.3, 1295.7, 1307, 1318.3, 1330, 1341.7, 1353, 1364.7, 1376, 1410, 1421.7, 1432.7, 1444.3, 1455.7, 1467.3, 1478.7, 1490, 1501.7, 1513, 1524.3, 1546.7, 1558.3, 1569.7, 1581, 1603.7, 1615.7, 1627.3, 1639, 1650];
const sales = [859, 876.5, 861, 876, 860, 855.7, 876, 872.5, 843.7, 875, 876, 771.7, 859.7, 861.7, 877, 859, 876, 839.3, 815, 816.7, 873.3, 867.7, 800.3, 859.3, 827.7, 855, 850.7, 867.7, 808.3, 629.7, 676.7, 855, 854, 837, 855, 875, 794.3, 870, 857.7, 799.3];
const profit = [874, 877.3, 876, 876.7, 870, 869, 877.3, 876.7, 867, 876.7, 877, 832.3, 872.7, 871.7, 877.3, 872, 876.7, 870, 863, 862.3, 876, 875, 859.7, 870.7, 866.7, 871, 871, 874.3, 865.3, 770, 806.3, 867.3, 868.7, 866.7, 871.7, 876, 849.3, 875.3, 873.3, 856.3];
[[sales, '#f28e2b'], [profit, '#4e79a7']].forEach(([ys, c]) => {
  add(trend, 'polyline', { points: months.map((x, i) => x + ',' + ys[i]).join(' '), fill: 'none', stroke: c, 'stroke-width': 3, 'stroke-linejoin': 'round' });
  months.forEach((x, i) => { if (i !== 28 || c !== '#f28e2b') add(trend, 'circle', { cx: x, cy: ys[i], r: 3, fill: c }); });
});
[['949', 1086.3, 850], ['855', 1119.3, 852], ['855', 1119.3, 866.7], ['949', 1084.3, 879], ['22', 1126.7, 885], ['930', 1156.3, 885],
 ['930', 1168.3, 879], ['1,129', 1152.3, 846], ['1,129', 1152.3, 860], ['1,742', 1206.3, 834], ['1,742', 1206.3, 858.3], ['104', 1190.3, 885],
 ['212', 1202, 885], ['124', 1223.3, 885], ['124', 1239, 865.3], ['5,454', 1264.3, 761.7], ['5,454', 1264.3, 822], ['926', 1268.3, 879],
 ['926', 1268.3, 885], ['19', 1296, 881.7], ['829', 1307.3, 851.7], ['829', 1307.3, 861.7], ['958', 1316, 879], ['958', 1316, 885],
 ['270', 1345, 877], ['3,211', 1324.3, 806], ['3,125', 1375.3, 807], ['1,972', 1312.3, 830], ['3,211', 1344.3, 853.7], ['523', 1394.3, 858],
 ['523', 1394.3, 885], ['221', 1397, 885], ['3,964', 1432.3, 790.7], ['3,964', 1412.7, 850.3], ['926', 1430.3, 879.3], ['926', 1430.3, 885.3],
 ['2,579', 1455.3, 818], ['2,579', 1455.3, 856.7], ['1,398', 1458.3, 870], ['10,313', 1471.7, 811.3], ['12,732', 1459.3, 634],
 ['12,732', 1488.3, 760], ['10,313', 1528.3, 682.3], ['1,238', 1506.7, 844], ['1,238', 1506.7, 858.3], ['3,457', 1501.7, 885.3],
 ['2,091', 1549.7, 827], ['2,091', 1549.7, 856.7], ['1,243', 1538.3, 872.7], ['1,185', 1581.7, 874.3], ['1,185', 1581.7, 885.3],
 ['4,285', 1575, 785], ['4,285', 1595, 840], ['4,040', 1629.3, 788.7], ['4,040', 1637.7, 847], ['1,024', 1637.7, 876.3], ['1,024', 1637.7, 885.3]
].forEach(([t, x, y]) => label(trend, x, y, t, numWidth(t)));
line(trend, 1015, 615.5, 1747, 615.5, '#c6c6c6');
line(trend, 1015, 891.5, 1747, 891.5, '#c6c6c6');
line(trend, 1084.5, 615, 1084.5, 954, '#c6c6c6');
line(trend, 1678.5, 615, 1678.5, 954, '#c6c6c6');
[['2019', 1112.5, 1112], ['2020', 1249.5, 1249], ['2021', 1387.5, 1387], ['2022', 1524.5, 1524], ['2023', 1661.5, 1658]].forEach(([t, tick, x]) => {
  line(trend, tick, 892, tick, 896, '#e0e0e0');
  label(trend, x, 914, t, 35.5, 'ax', 'middle');
});
[['10K', 688], ['5K', 786], ['0K', 883]].forEach(([t, y]) => {
  label(trend, 1077, y, t, t.length * 9 - 0.5, 'ax', 'end');
  label(trend, 1686, y, t, t.length * 9 - 0.5, 'ax');
});
label(trend, 1038, 770, 'Sales', 37, 'ttl', 'start', true);
label(trend, 1735, 772, 'Profit', 41, 'ttl', 'start', true);
label(trend, 1381, 942, 'Month of Order Date', 146, 'ttl', 'middle');
```
